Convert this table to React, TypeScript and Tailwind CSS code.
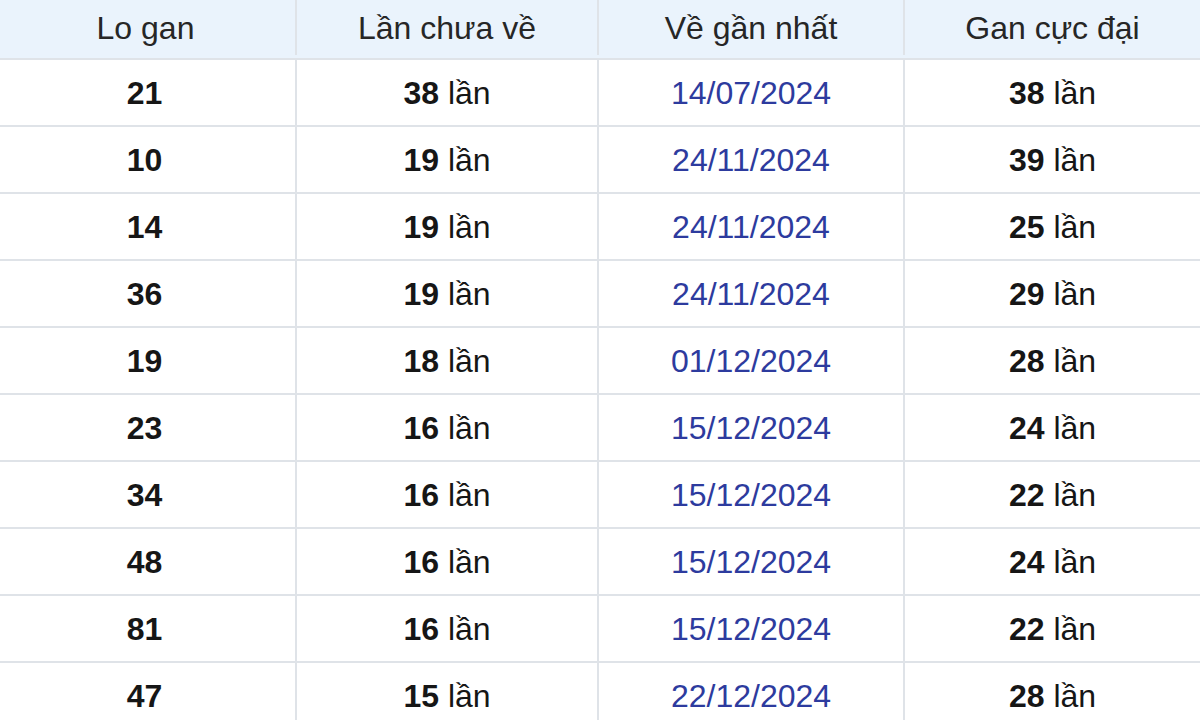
const rows = [
  { lo: "21", chua: "38", date: "14/07/2024", max: "38" },
  { lo: "10", chua: "19", date: "24/11/2024", max: "39" },
  { lo: "14", chua: "19", date: "24/11/2024", max: "25" },
  { lo: "36", chua: "19", date: "24/11/2024", max: "29" },
  { lo: "19", chua: "18", date: "01/12/2024", max: "28" },
  { lo: "23", chua: "16", date: "15/12/2024", max: "24" },
  { lo: "34", chua: "16", date: "15/12/2024", max: "22" },
  { lo: "48", chua: "16", date: "15/12/2024", max: "24" },
  { lo: "81", chua: "16", date: "15/12/2024", max: "22" },
  { lo: "47", chua: "15", date: "22/12/2024", max: "28" },
];

const grid = "grid grid-cols-[297px_302px_306px_1fr]";
const cell = "flex items-center justify-center border-r-2 border-[#dfe3e8] last:border-r-0";

export default function App() {
  return (
    <div className="h-[720px] w-[1200px] overflow-hidden bg-white font-['Liberation_Sans',Arial,sans-serif] text-[32px] text-[#161616]">
      <div className={`${grid} h-[60px] border-b-2 border-[#dfe3e8] bg-[#eaf3fc] pb-[3px] text-[#262626]`}>
        <div className={`${cell} pr-[4px]`}>Lo gan</div>
        <div className={cell}>Lần chưa về</div>
        <div className={cell}>Về gần nhất</div>
        <div className={cell}>Gan cực đại</div>
      </div>

      {rows.map((r, i) => (
        <div key={i} className={`${grid} h-[67px] border-b-2 border-[#dfe3e8]`}>
          <div className={`${cell} pr-[6px] font-bold`}>{r.lo}</div>
          <div className={cell}>
            <span className="font-bold">{r.chua}</span>&nbsp;lần
          </div>
          <div className={`${cell} text-[#2d3b9e]`}>{r.date}</div>
          <div className={cell}>
            <span className="font-bold">{r.max}</span>&nbsp;lần
          </div>
        </div>
      ))}
    </div>
  );
}
